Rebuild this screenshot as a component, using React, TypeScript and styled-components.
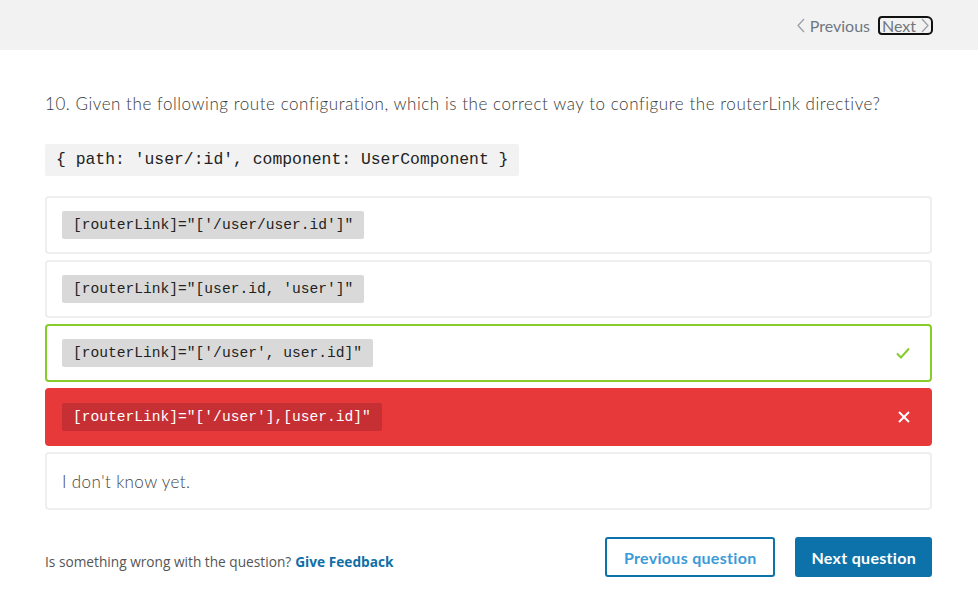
import React from 'react';
import styled, { createGlobalStyle } from 'styled-components';

const GlobalStyle = createGlobalStyle`
  body {
    margin: 0;
    background: #fff;
    font-family: Lato, "Open Sans", Arial, sans-serif;
    color: #333;
  }
`;

const TopBar = styled.div`
  height: 50px;
  background: #f2f2f2;
  display: flex;
  align-items: center;
  justify-content: flex-end;
  padding: 0 45px 0 0;
  gap: 4px;
`;

const NavLink = styled.span<{ $circled?: boolean }>`
  display: inline-flex;
  align-items: center;
  gap: 5px;
  font-size: 16px;
  color: #6f7780;
  padding: 0 2px;
  border: ${(p) => (p.$circled ? '2px solid #111' : '2px solid transparent')};
  border-radius: 4px 6px 5px 4px;
  height: 15px;
`;

const Main = styled.main`
  padding: 41px 46px 0 45px;
`;

const Question = styled.p`
  margin: 0;
  font-size: 17px;
  font-weight: 300;
  line-height: 26px;
  color: #3a3a3a;
  letter-spacing: 0.55px;
  white-space: nowrap;
`;

const CodeBlock = styled.div`
  display: inline-block;
  margin-top: 27px;
  background: #f2f2f2;
  border-radius: 2px;
  padding: 0 11px;
  height: 32px;
  line-height: 32px;
  font-family: "Liberation Mono", monospace;
  font-size: 16.4px;
  color: #222;
`;

const Options = styled.div`
  display: flex;
  flex-direction: column;
  gap: 6px;
  margin-top: 20px;
`;

type State = 'none' | 'correct' | 'wrong';

const Option = styled.div<{ $state: State }>`
  height: 58px;
  box-sizing: border-box;
  display: flex;
  align-items: center;
  justify-content: space-between;
  padding: 0 19px 0 15px;
  border-radius: 4px;
  border: 2px solid
    ${(p) => (p.$state === 'correct' ? '#86cc2a' : p.$state === 'wrong' ? '#e8393a' : '#efefef')};
  background: ${(p) => (p.$state === 'wrong' ? '#e8393a' : '#fff')};
`;

const Chip = styled.code<{ $state: State }>`
  display: inline-block;
  height: 28px;
  line-height: 29px;
  padding: 0 11px;
  border-radius: 2px;
  font-family: "Liberation Mono", monospace;
  font-size: 14.6px;
  background: ${(p) => (p.$state === 'wrong' ? '#c62f33' : '#d9d9d9')};
  color: ${(p) => (p.$state === 'wrong' ? '#fff' : '#222')};
`;

const PlainAnswer = styled.span`
  font-size: 17px;
  font-weight: 300;
  letter-spacing: 0.4px;
  color: #444;
`;

const Footer = styled.div`
  display: flex;
  align-items: center;
  justify-content: space-between;
  margin-top: 27px;
`;

const FeedbackText = styled.span`
  font-size: 13.7px;
  color: #555;
  font-family: "Open Sans", Arial, sans-serif;
  padding-top: 8px;
`;

const FeedbackLink = styled.a`
  font-weight: 700;
  color: #0f6fa6;
  margin-left: 4px;
  text-decoration: none;
`;

const Buttons = styled.div`
  display: flex;
  gap: 20px;
`;

const Button = styled.button<{ $primary?: boolean }>`
  height: 40px;
  box-sizing: border-box;
  padding: 0 ${(p) => (p.$primary ? '14px' : '17px')};
  border-radius: 3px;
  border: 2px solid #0e72aa;
  background: ${(p) => (p.$primary ? '#0e72aa' : '#fff')};
  color: ${(p) => (p.$primary ? '#fff' : '#3b9ad8')};
  font-family: Lato, Arial, sans-serif;
  font-weight: 700;
  font-size: 16px;
  letter-spacing: 0.3px;
`;

const Chevron = ({ dir }: { dir: 'left' | 'right' }) => (
  <svg width="8" height="15" viewBox="0 0 8 15" fill="none" stroke="#9aa0a6" strokeWidth="1.3">
    {dir === 'left' ? <path d="M7 1 1 7.5l6 6.5" /> : <path d="M1 1l6 6.5-6 6.5" />}
  </svg>
);

const Check = () => (
  <svg width="16" height="14" viewBox="0 0 16 14" fill="none" stroke="#86cc2a" strokeWidth="2">
    <path d="M2 7.5l4 4 8-9" />
  </svg>
);

const Cross = () => (
  <svg width="14" height="14" viewBox="0 0 14 14" fill="none" stroke="#fff" strokeWidth="2">
    <path d="M2 2l10 10M12 2 2 12" />
  </svg>
);

const answers: { text: string; state: State }[] = [
  { text: `[routerLink]="['/user/user.id']"`, state: 'none' },
  { text: `[routerLink]="[user.id, 'user']"`, state: 'none' },
  { text: `[routerLink]="['/user', user.id]"`, state: 'correct' },
  { text: `[routerLink]="['/user'],[user.id]"`, state: 'wrong' },
];

const App: React.FC = () => {
  return (
    <>
      <GlobalStyle />
      <TopBar>
        <NavLink>
          <Chevron dir="left" />
          Previous
        </NavLink>
        <NavLink $circled>
          Next
          <Chevron dir="right" />
        </NavLink>
      </TopBar>
      <Main>
        <Question>
          10. Given the following route configuration, which is the correct way to configure the
          routerLink directive?
        </Question>
        <CodeBlock>{`{ path: 'user/:id', component: UserComponent }`}</CodeBlock>
        <Options>
          {answers.map((a, i) => (
            <Option key={i} $state={a.state}>
              <Chip $state={a.state}>{a.text}</Chip>
              {a.state === 'correct' && <Check />}
              {a.state === 'wrong' && <Cross />}
            </Option>
          ))}
          <Option $state="none">
            <PlainAnswer>I don't know yet.</PlainAnswer>
          </Option>
        </Options>
        <Footer>
          <FeedbackText>
            Is something wrong with the question?
            <FeedbackLink href="#">Give Feedback</FeedbackLink>
          </FeedbackText>
          <Buttons>
            <Button>Previous question</Button>
            <Button $primary>Next question</Button>
          </Buttons>
        </Footer>
      </Main>
    </>
  );
};

export default App;
